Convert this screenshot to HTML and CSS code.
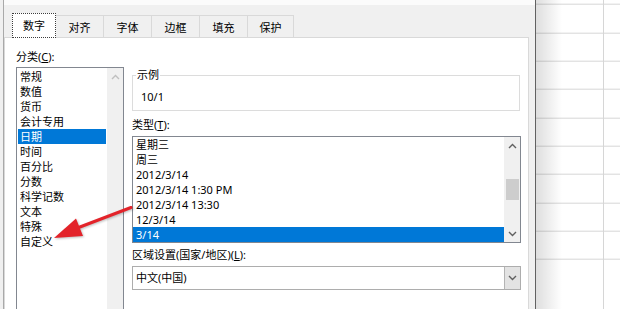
FILE: index.html
```html
<!DOCTYPE html>
<html lang="zh-CN">
<head>
    <meta charset="UTF-8">
    <title>设置单元格格式</title>
    <link rel="stylesheet" href="styles.css">
</head>
<body>
    <div class="screen">
        <div class="gutter"></div>
        <div class="dialog">
            <div class="titlebar"></div>
            <div class="tabs">
                <div class="tab active">数字</div>
                <div class="tab">对齐</div>
                <div class="tab">字体</div>
                <div class="tab">边框</div>
                <div class="tab">填充</div>
                <div class="tab last">保护</div>
            </div>
            <div class="panel">
                <div class="col-left">
                    <div class="label">分类(<u>C</u>):</div>
                    <div class="listbox category">
                        <div class="items">
                            <div class="item">常规</div>
                            <div class="item">数值</div>
                            <div class="item">货币</div>
                            <div class="item">会计专用</div>
                            <div class="item selected">日期</div>
                            <div class="item">时间</div>
                            <div class="item">百分比</div>
                            <div class="item">分数</div>
                            <div class="item">科学记数</div>
                            <div class="item">文本</div>
                            <div class="item">特殊</div>
                            <div class="item">自定义</div>
                        </div>
                        <div class="scrollbar disabled">
                            <div class="sb-btn">
                                <svg width="9" height="6" viewBox="0 0 9 6"><polyline points="1,5 4.5,1.5 8,5" /></svg>
                            </div>
                        </div>
                    </div>
                </div>
                <div class="col-right">
                    <fieldset class="sample">
                        <legend>示例</legend>
                        <div class="sample-value">10/1</div>
                    </fieldset>
                    <div class="label gap-top">类型(<u>T</u>):</div>
                    <div class="listbox types">
                        <div class="items">
                            <div class="item">星期三</div>
                            <div class="item">周三</div>
                            <div class="item">2012/3/14</div>
                            <div class="item">2012/3/14 1:30 PM</div>
                            <div class="item">2012/3/14 13:30</div>
                            <div class="item">12/3/14</div>
                            <div class="item selected">3/14</div>
                        </div>
                        <div class="scrollbar">
                            <div class="sb-btn">
                                <svg width="9" height="6" viewBox="0 0 9 6"><polyline points="1,5 4.5,1.5 8,5" /></svg>
                            </div>
                            <div class="sb-track"><div class="sb-thumb"></div></div>
                            <div class="sb-btn">
                                <svg width="9" height="6" viewBox="0 0 9 6"><polyline points="1,1 4.5,4.5 8,1" /></svg>
                            </div>
                        </div>
                    </div>
                    <div class="label locale">区域设置(国家/地区)(<u>L</u>):</div>
                    <div class="select">
                        <div class="select-text">中文(中国)</div>
                        <div class="select-btn">
                            <svg width="9" height="6" viewBox="0 0 9 6"><polyline points="1,1 4.5,4.5 8,1" /></svg>
                        </div>
                    </div>
                </div>
            </div>
        </div>
        <div class="sheet"></div>

        <!-- red annotation arrow -->
        <svg class="mark" width="620" height="309" viewBox="0 0 620 309">
            <line x1="131" y1="207.5" x2="76" y2="228.5" />
            <polygon points="54,238 76,218.5 83,236" />
        </svg>
    </div>
</body>
</html>
```

FILE: styles.css
```css
body {
    margin: 0;
    font-family: "Noto Sans", "Noto Sans CJK SC", sans-serif;
    font-size: 11px;
    color: #000;
}
.screen {
    position: relative;
    display: flex;
    width: 620px;
    height: 309px;
    overflow: hidden;
    background: #fff;
}
.gutter {
    width: 3px;
    flex-shrink: 0;
    background: #f0f0f0;
}
.dialog {
    width: 533px;
    flex-shrink: 0;
    box-sizing: border-box;
    display: flex;
    flex-direction: column;
    background: #f0f0f0;
    border-left: 1px solid #a9a9a9;
    border-right: 1px solid #616161;
}
.titlebar {
    height: 5px;
    flex-shrink: 0;
    background: #fbfbfb;
}
.tabs {
    height: 32px;
    flex-shrink: 0;
    display: flex;
    align-items: flex-end;
    padding-left: 8px;
}
.tab {
    width: 49px;
    height: 22px;
    box-sizing: border-box;
    margin-left: -1px;
    border: 1px solid #d9d9d9;
    border-bottom: none;
    display: flex;
    align-items: center;
    justify-content: center;
}
.tab.last {
    width: 47px;
}
.tab.active {
    width: 44px;
    height: 25px;
    margin-left: 0;
    margin-bottom: -1px;
    padding-bottom: 1px;
    position: relative;
    z-index: 1;
    background: #fff;
    border: 1px dotted #3c3c3c;
}
.panel {
    height: 300px;
    flex-shrink: 0;
    box-sizing: border-box;
    margin-right: 6px;
    display: flex;
    gap: 8px;
    padding: 12px 6px 0 11px;
    background: #fff;
    border: 1px solid #d9d9d9;
}
.col-left {
    width: 108px;
    flex-shrink: 0;
}
.col-right {
    width: 389px;
    flex-shrink: 0;
    padding-top: 18px;
}
.label {
    line-height: 14px;
    height: 14px;
    margin-bottom: 3px;
}
.label.gap-top {
    margin-top: 7px;
    margin-bottom: 4px;
}
.label.locale {
    margin-top: 5px;
    margin-bottom: 4px;
}
.listbox {
    display: flex;
    box-sizing: border-box;
    border: 1px solid #828790;
    background: #fff;
}
.listbox.category {
    height: 260px;
}
.listbox.types {
    height: 107px;
}
.items {
    flex: 1;
}
.category .items {
    padding: 1px;
}
.item {
    height: 15px;
    line-height: 15px;
    padding-left: 2px;
    white-space: nowrap;
}
.types .item {
    padding-left: 3px;
}
.item.selected {
    background: #0078d7;
    color: #fff;
}
.scrollbar {
    width: 16px;
    display: flex;
    flex-direction: column;
    background: #f0f0f0;
}
.sb-btn {
    height: 17px;
    display: flex;
    align-items: center;
    justify-content: center;
}
.sb-btn svg, .select-btn svg {
    fill: none;
    stroke: #606060;
    stroke-width: 1.4;
}
.scrollbar.disabled .sb-btn svg {
    stroke: #bfbfbf;
}
.sb-track {
    flex: 1;
}
.sb-thumb {
    width: 13px;
    height: 21px;
    margin: 25px 1px 0 2px;
    background: #cdcdcd;
}
.sample {
    margin: 0 1px 0 0;
    padding: 0;
    min-width: 0;
    border: 1px solid #dcdcdc;
}
.sample legend {
    margin-left: 3px;
    padding: 0 1px;
    line-height: 14px;
}
.sample-value {
    line-height: 14px;
    padding: 8px 8px 6px;
}
.select {
    height: 24px;
    box-sizing: border-box;
    display: flex;
    border: 1px solid #adadad;
    background: #fff;
}
.select-text {
    flex: 1;
    line-height: 22px;
    padding-left: 3px;
}
.select-btn {
    width: 15px;
    display: flex;
    align-items: center;
    justify-content: center;
    background: #e3e3e3;
    border-left: 1px solid #b4b4b4;
}
.sheet {
    flex: 1;
    background-color: #fff;
    background-image:
        linear-gradient(to right, rgba(0, 0, 0, 0.13), rgba(0, 0, 0, 0) 26px),
        linear-gradient(#d6d6d6, #d6d6d6),
        repeating-linear-gradient(to bottom, transparent 0, transparent 27.33px, #d6d6d6 27.33px, #d6d6d6 28.33px);
    background-size: 100% 100%, 1px 100%, 100% 100%;
    background-position: 0 0, 67px 0, 0 -23.33px;
    background-repeat: no-repeat, no-repeat, repeat;
}
.mark {
    position: absolute;
    left: 0;
    top: 0;
    pointer-events: none;
    filter: drop-shadow(1px 1px 1px rgba(0, 0, 0, 0.25));
}
.mark line {
    stroke: #e3232a;
    stroke-width: 3;
    stroke-linecap: round;
}
.mark polygon {
    fill: #e3232a;
}
```
